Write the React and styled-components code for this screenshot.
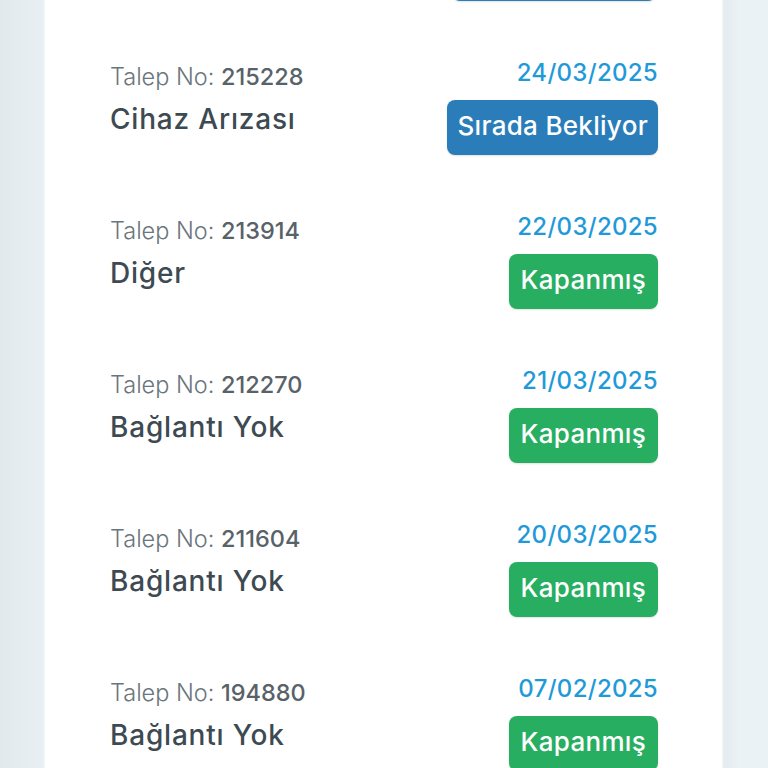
import React from "react";
import styled, { createGlobalStyle, css } from "styled-components";

const GlobalStyle = createGlobalStyle`
  html, body {
    margin: 0;
    padding: 0;
    background: #e9f0f4;
    overflow: hidden;
  }
  body {
    font-family: Inter, "Noto Sans", sans-serif;
  }
`;

const Page = styled.div`
  min-height: 768px;
  background: linear-gradient(to right, #e1e9ed 0px, #e9f0f4 44px, #e9f0f4 722px, #e4ecf0 724px, #ebf2f6 740px);
`;

const Card = styled.div`
  margin: -54px 46px 0 45px;
  background: #ffffff;
  box-shadow: 0 0 3px rgba(255, 255, 255, 0.9);
  padding: 0 64px 0 65px;
`;

const Row = styled.div`
  display: flex;
  justify-content: space-between;
  align-items: flex-start;
  padding: 27px 0;
`;

const TopRow = styled.div`
  display: flex;
  justify-content: flex-end;
  padding: 0 2px 27px 0;
`;

const Left = styled.div`
  display: flex;
  flex-direction: column;
  padding-top: 6px;
`;

const Right = styled.div`
  display: flex;
  flex-direction: column;
  align-items: flex-end;
  gap: 10px;
`;

const TicketNo = styled.div`
  font-size: 23.5px;
  line-height: 32px;
  font-weight: 300;
  color: #6b757c;

  b {
    font-weight: 500;
    color: #586269;
  }
`;

const Title = styled.div`
  margin-top: 8px;
  font-size: 28px;
  line-height: 36px;
  font-weight: 500;
  letter-spacing: 0.8px;
  color: #3d4a52;
`;

const DateText = styled.div`
  margin-top: 1px;
  font-size: 24px;
  line-height: 34px;
  font-weight: 500;
  letter-spacing: 0.3px;
  color: #1f9ad9;
`;

const StatusBadge = styled.div`
  height: 55px;
  box-sizing: border-box;
  padding: 0 ${(props) => (props.status === "closed" ? 12 : 10)}px 5px;
  display: flex;
  align-items: center;
  border-radius: 8px;
  font-size: 26px;
  font-weight: 500;
  letter-spacing: 0.3px;
  color: #ffffff;
  box-shadow: 0 1px 2px rgba(0, 0, 0, 0.12);
  ${(props) =>
    props.status === "closed"
      ? css`
          background-color: #27ae60;
        `
      : css`
          background-color: #2a7db9;
        `}
`;

const PartialBadge = styled(StatusBadge)`
  width: 204px;
`;

const tickets = [
  { no: "215228", title: "Cihaz Arızası", date: "24/03/2025", status: "waiting", label: "Sırada Bekliyor" },
  { no: "213914", title: "Diğer", date: "22/03/2025", status: "closed", label: "Kapanmış" },
  { no: "212270", title: "Bağlantı Yok", date: "21/03/2025", status: "closed", label: "Kapanmış" },
  { no: "211604", title: "Bağlantı Yok", date: "20/03/2025", status: "closed", label: "Kapanmış" },
  { no: "194880", title: "Bağlantı Yok", date: "07/02/2025", status: "closed", label: "Kapanmış" },
];

const App = () => {
  return (
    <>
      <GlobalStyle />
      <Page>
        <Card>
          <TopRow>
            <PartialBadge status="waiting" />
          </TopRow>
          {tickets.map((t) => (
            <Row key={t.no}>
              <Left>
                <TicketNo>
                  Talep No: <b>{t.no}</b>
                </TicketNo>
                <Title>{t.title}</Title>
              </Left>
              <Right>
                <DateText>{t.date}</DateText>
                <StatusBadge status={t.status}>{t.label}</StatusBadge>
              </Right>
            </Row>
          ))}
        </Card>
      </Page>
    </>
  );
};

export default App;
